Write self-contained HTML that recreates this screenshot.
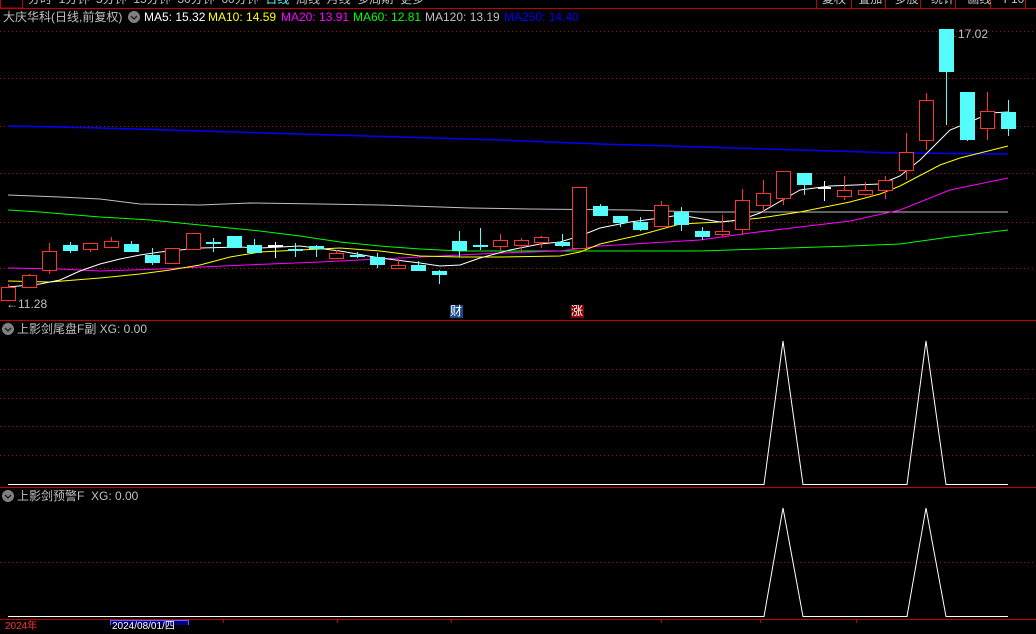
<!DOCTYPE html>
<html><head><meta charset="utf-8"><style>
body{margin:0;background:#000;width:1036px;height:625px;overflow:hidden;position:relative;font-family:"Liberation Sans","Noto Sans CJK SC",sans-serif}
.t{position:absolute;font-size:12px;white-space:nowrap;line-height:14px}
.r rect{fill:#000;stroke:#ff3232}.r line{stroke:#ff3232}
.c rect{fill:#54fcfc;stroke:#54fcfc}.c line{stroke:#54fcfc}
.w line,.w rect{stroke:#fff;fill:#fff}
</style></head><body>
<svg width="1036" height="625" style="position:absolute;left:0;top:0" shape-rendering="crispEdges">
<!-- top bar -->
<rect x="0" y="8" width="1036" height="1" fill="#c00000"/>
<rect x="0.5" y="-2" width="22" height="10" fill="none" stroke="#c00000"/>
<g fill="#c00000"><rect x="816" y="0" width="1" height="8"/><rect x="851" y="0" width="1" height="8"/><rect x="885" y="0" width="1" height="8"/><rect x="920" y="0" width="1" height="8"/><rect x="955" y="0" width="1" height="8"/><rect x="990" y="0" width="1" height="8"/><rect x="1025" y="0" width="1" height="8"/></g>
<!-- grid -->
<g stroke="#a01010" stroke-dasharray="1,3">
<line x1="0" y1="31.5" x2="1036" y2="31.5"/><line x1="0" y1="78.5" x2="1036" y2="78.5"/><line x1="0" y1="126.5" x2="1036" y2="126.5"/><line x1="0" y1="173.5" x2="1036" y2="173.5"/><line x1="0" y1="222.5" x2="1036" y2="222.5"/><line x1="0" y1="268.5" x2="1036" y2="268.5"/>
<line x1="0" y1="369.5" x2="1036" y2="369.5"/><line x1="0" y1="398.5" x2="1036" y2="398.5"/><line x1="0" y1="426.5" x2="1036" y2="426.5"/><line x1="0" y1="455.5" x2="1036" y2="455.5"/>
<line x1="0" y1="562.5" x2="1036" y2="562.5"/>
</g>
<rect x="0" y="320" width="1036" height="1" fill="#c00000"/>
<rect x="0" y="487" width="1036" height="1" fill="#c00000"/>
<rect x="0" y="619" width="1036" height="1" fill="#c00000"/>
<!-- MAs -->
<g fill="none" stroke-width="1" shape-rendering="auto">
<polyline stroke="#c0c0c0" points="8,195 60,197 100,199 140,204 200,205 250,203 320,204 380,205 470,208 530,209 630,210 700,212 1008,212"/>
<polyline stroke="#0000ff" stroke-width="1.5" points="8,126 60,127 100,128 200,131 300,134 400,137 500,140 600,144 700,147 800,150 900,153 1008,154"/>
<polyline stroke="#00ff00" points="8,210 40,212 100,217 150,220 200,225 260,231 300,236 340,242 380,246 420,249 460,251 700,251 760,249 850,246 900,244 950,237 1008,230"/>
<polyline stroke="#ff00ff" points="8,268 60,269 100,271 160,269 200,267 270,264 320,262 400,258 440,256 500,253 560,251 600,246 650,243 700,240 750,233 800,227 850,221 900,210 950,190 1008,178"/>
<polyline stroke="#ffff00" points="8,281 50,282 100,278 140,274 170,270 200,265 230,257 260,252 300,250 340,248 380,251 420,256 460,257 500,257 560,256 580,252 600,244 640,235 680,224 720,222 760,218 800,212 850,202 880,194 900,186 940,165 960,158 1008,146"/>
<polyline stroke="#ffffff" points="8,287 40,284 60,280 80,271 100,264 120,259 140,255 160,252 200,248 240,247 260,248 300,246 340,251 380,258 420,263 440,266 460,265 480,258 510,250 540,244 560,242 580,236 600,228 630,222 660,218 680,215 720,222 740,220 760,213 800,190 830,186 880,184 900,176 920,160 935,145 950,130 970,122 990,113 1008,112"/>
</g>
<!-- candles -->
<g class="r"><line x1="8.5" y1="284" x2="8.5" y2="300"/><rect x="1.5" y="287.5" width="14" height="13"/></g>
<g class="r"><line x1="29.5" y1="274" x2="29.5" y2="287"/><rect x="22.5" y="275.5" width="14" height="12"/></g>
<g class="r"><line x1="49.5" y1="243" x2="49.5" y2="274"/><rect x="42.5" y="251.5" width="14" height="19"/></g>
<g class="c"><line x1="70.5" y1="242" x2="70.5" y2="253"/><rect x="63.5" y="245.5" width="14" height="5"/></g>
<g class="r"><line x1="90.5" y1="243" x2="90.5" y2="252"/><rect x="83.5" y="243.5" width="14" height="6"/></g>
<g class="r"><line x1="111.5" y1="237" x2="111.5" y2="247"/><rect x="104.5" y="241.5" width="14" height="6"/></g>
<g class="c"><line x1="131.5" y1="241" x2="131.5" y2="251"/><rect x="124.5" y="244.5" width="14" height="7"/></g>
<g class="c"><line x1="152.5" y1="248" x2="152.5" y2="265"/><rect x="145.5" y="255.5" width="14" height="7"/></g>
<g class="r"><line x1="172.5" y1="248" x2="172.5" y2="263"/><rect x="165.5" y="248.5" width="14" height="15"/></g>
<g class="r"><line x1="193.5" y1="233" x2="193.5" y2="249"/><rect x="186.5" y="233.5" width="14" height="16"/></g>
<g class="c"><line x1="213.5" y1="238" x2="213.5" y2="252"/><rect x="206.5" y="242.5" width="14" height="1"/></g>
<g class="c"><line x1="234.5" y1="236" x2="234.5" y2="247"/><rect x="227.5" y="236.5" width="14" height="11"/></g>
<g class="c"><line x1="254.5" y1="239" x2="254.5" y2="253"/><rect x="247.5" y="245.5" width="14" height="7"/></g>
<g class="w"><line x1="275.5" y1="242" x2="275.5" y2="258"/><rect x="268.5" y="245.5" width="14" height="1"/></g>
<g class="c"><line x1="295.5" y1="243" x2="295.5" y2="257"/><rect x="288.5" y="249.5" width="14" height="1"/></g>
<g class="c"><line x1="316.5" y1="245" x2="316.5" y2="257"/><rect x="309.5" y="246.5" width="14" height="2"/></g>
<g class="r"><line x1="336.5" y1="250" x2="336.5" y2="258"/><rect x="329.5" y="253.5" width="14" height="5"/></g>
<g class="c"><line x1="357.5" y1="252" x2="357.5" y2="258"/><rect x="350.5" y="255.5" width="14" height="1"/></g>
<g class="c"><line x1="377.5" y1="253" x2="377.5" y2="268"/><rect x="370.5" y="257.5" width="14" height="7"/></g>
<g class="r"><line x1="398.5" y1="259" x2="398.5" y2="268"/><rect x="391.5" y="265.5" width="14" height="3"/></g>
<g class="c"><line x1="418.5" y1="261" x2="418.5" y2="270"/><rect x="411.5" y="265.5" width="14" height="5"/></g>
<g class="c"><line x1="439.5" y1="270" x2="439.5" y2="284"/><rect x="432.5" y="271.5" width="14" height="3"/></g>
<g class="c"><line x1="459.5" y1="231" x2="459.5" y2="257"/><rect x="452.5" y="241.5" width="14" height="9"/></g>
<g class="c"><line x1="480.5" y1="228" x2="480.5" y2="250"/><rect x="473.5" y="245.5" width="14" height="1"/></g>
<g class="r"><line x1="500.5" y1="234" x2="500.5" y2="251"/><rect x="493.5" y="240.5" width="14" height="6"/></g>
<g class="r"><line x1="521.5" y1="238" x2="521.5" y2="252"/><rect x="514.5" y="240.5" width="14" height="5"/></g>
<g class="r"><line x1="541.5" y1="236" x2="541.5" y2="248"/><rect x="534.5" y="237.5" width="14" height="5"/></g>
<g class="c"><line x1="562.5" y1="234" x2="562.5" y2="247"/><rect x="555.5" y="242.5" width="14" height="3"/></g>
<g class="r"><line x1="579.5" y1="187" x2="579.5" y2="248"/><rect x="572.5" y="187.5" width="14" height="61"/></g>
<g class="c"><line x1="600.5" y1="204" x2="600.5" y2="215"/><rect x="593.5" y="206.5" width="14" height="9"/></g>
<g class="c"><line x1="620.5" y1="216" x2="620.5" y2="227"/><rect x="613.5" y="216.5" width="14" height="6"/></g>
<g class="c"><line x1="640.5" y1="217" x2="640.5" y2="231"/><rect x="633.5" y="222.5" width="14" height="7"/></g>
<g class="r"><line x1="661.5" y1="201" x2="661.5" y2="226"/><rect x="654.5" y="205.5" width="14" height="21"/></g>
<g class="c"><line x1="681.5" y1="207" x2="681.5" y2="231"/><rect x="674.5" y="212.5" width="14" height="12"/></g>
<g class="c"><line x1="702.5" y1="227" x2="702.5" y2="240"/><rect x="695.5" y="231.5" width="14" height="5"/></g>
<g class="r"><line x1="722.5" y1="215" x2="722.5" y2="236"/><rect x="715.5" y="231.5" width="14" height="3"/></g>
<g class="r"><line x1="742.5" y1="189" x2="742.5" y2="235"/><rect x="735.5" y="200.5" width="14" height="29"/></g>
<g class="r"><line x1="763.5" y1="180" x2="763.5" y2="213"/><rect x="756.5" y="193.5" width="14" height="12"/></g>
<g class="r"><line x1="783.5" y1="171" x2="783.5" y2="205"/><rect x="776.5" y="171.5" width="14" height="27"/></g>
<g class="c"><line x1="804.5" y1="173" x2="804.5" y2="195"/><rect x="797.5" y="173.5" width="14" height="11"/></g>
<g class="w"><line x1="824.5" y1="181" x2="824.5" y2="201"/><rect x="818.5" y="187.5" width="12" height="1"/></g>
<g class="r"><line x1="844.5" y1="176" x2="844.5" y2="200"/><rect x="837.5" y="190.5" width="14" height="6"/></g>
<g class="r"><line x1="865.5" y1="182" x2="865.5" y2="196"/><rect x="858.5" y="190.5" width="14" height="4"/></g>
<g class="r"><line x1="885.5" y1="176" x2="885.5" y2="199"/><rect x="878.5" y="180.5" width="14" height="10"/></g>
<g class="r"><line x1="906.5" y1="133" x2="906.5" y2="180"/><rect x="899.5" y="152.5" width="14" height="18"/></g>
<g class="r"><line x1="926.5" y1="93" x2="926.5" y2="150"/><rect x="919.5" y="100.5" width="14" height="40"/></g>
<g class="c"><line x1="946.5" y1="29" x2="946.5" y2="125"/><rect x="939.5" y="29.5" width="14" height="42"/></g>
<g class="c"><line x1="967.5" y1="92" x2="967.5" y2="141"/><rect x="960.5" y="92.5" width="14" height="47"/></g>
<g class="r"><line x1="987.5" y1="92" x2="987.5" y2="140"/><rect x="980.5" y="111.5" width="14" height="17"/></g>
<g class="c"><line x1="1008.5" y1="100" x2="1008.5" y2="136"/><rect x="1001.5" y="112.5" width="14" height="16"/></g>
<!-- sub panels -->
<g stroke="#fff" fill="none" shape-rendering="auto">
<polyline points="8,484.5 764,484.5 783,341 803,484.5 907,484.5 926,341 946,484.5 1008,484.5"/>
<polyline points="8,616.5 764,616.5 783,508 803,616.5 907,616.5 926,508 946,616.5 1008,616.5"/>
</g>
<!-- header icons -->
<circle cx="134" cy="17" r="6" fill="#808080"/><path d="M131 16l3 3 3-3" stroke="#222" fill="none" stroke-width="1.5" shape-rendering="auto"/>
<circle cx="8" cy="329" r="6" fill="#808080"/><path d="M5 328l3 3 3-3" stroke="#222" fill="none" stroke-width="1.5" shape-rendering="auto"/>
<circle cx="8" cy="496" r="6" fill="#808080"/><path d="M5 495l3 3 3-3" stroke="#222" fill="none" stroke-width="1.5" shape-rendering="auto"/>
<!-- bottom -->
<rect x="110.5" y="620.5" width="78" height="6" fill="#000080" stroke="#6060ff"/>
<g fill="#c00000"><rect x="223" y="620" width="1" height="3"/><rect x="337" y="620" width="1" height="3"/><rect x="451" y="620" width="1" height="3"/><rect x="661" y="620" width="1" height="3"/><rect x="760" y="620" width="1" height="3"/><rect x="856" y="620" width="1" height="3"/></g>
</svg>
<div class="t" style="left:28px;top:-8px;color:#c0c0c0">分时 &nbsp;1分钟 &nbsp;5分钟 &nbsp;15分钟 &nbsp;30分钟 &nbsp;60分钟 &nbsp;<span style="color:#54fcfc">日线</span> &nbsp;周线 &nbsp;月线 &nbsp;多周期 &nbsp;更多</div>
<div class="t" style="left:822px;top:-8px;color:#c0c0c0;word-spacing:9px">复权 叠加 多股 统计 画线 F10</div>
<div class="t" style="left:3px;top:10px;color:#c0c0c0">大庆华科(日线,前复权)</div>
<div class="t" style="left:144px;top:10px;color:#fff">MA5: 15.32</div>
<div class="t" style="left:208px;top:10px;color:#ff0">MA10: 14.59</div>
<div class="t" style="left:281px;top:10px;color:#f0f">MA20: 13.91</div>
<div class="t" style="left:353px;top:10px;color:#0f0">MA60: 12.81</div>
<div class="t" style="left:425px;top:10px;color:#c0c0c0">MA120: 13.19</div>
<div class="t" style="left:504px;top:10px;color:#0000ff">MA250: 14.40</div>
<div class="t" style="left:946px;top:27px;color:#c0c0c0">←17.02</div>
<div class="t" style="left:6px;top:297px;color:#c0c0c0">←11.28</div>
<div class="t" style="left:450px;top:305px;color:#fff;background:#1a4a8a;width:13px;height:13px;line-height:13px;font-size:12px">财</div>
<div class="t" style="left:571px;top:305px;color:#fff;background:#8b0000;width:13px;height:13px;line-height:13px;font-size:12px">涨</div>
<div class="t" style="left:17px;top:322px;color:#c0c0c0">上影剑尾盘F副 XG: 0.00</div>
<div class="t" style="left:17px;top:489px;color:#c0c0c0">上影剑预警F &nbsp;XG: 0.00</div>
<div class="t" style="left:5px;top:620px;color:#ff3232;font-size:10px">2024年</div>
<div class="t" style="left:112px;top:620px;color:#fff;font-size:10px">2024/08/01/四</div>
</body></html>
